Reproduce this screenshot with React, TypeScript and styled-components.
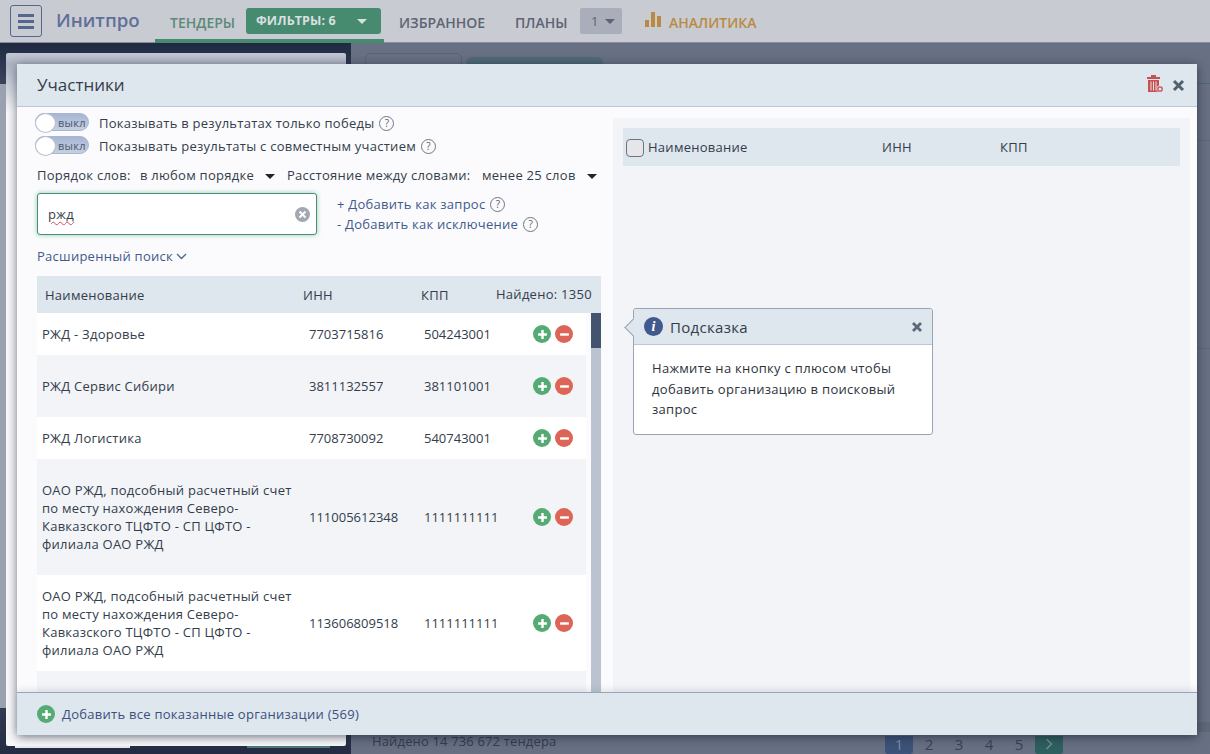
import React from "react";
import styled, { createGlobalStyle } from "styled-components";

const Global = createGlobalStyle`
  html, body { margin: 0; padding: 0; width: 1210px; height: 754px; overflow: hidden; background: #687083; }
  * { box-sizing: border-box; }
  body { font-family: "Open Sans", "Noto Sans", sans-serif; font-size: 13px; color: #333d4b; }
`;

const Page = styled.div`
  position: relative;
  width: 1210px;
  height: 754px;
  overflow: hidden;
  background: #687083;
`;

const TopBar = styled.header`
  position: absolute;
  inset: 0 0 auto 0;
  height: 43px;
  background: #c9cbd2;
  border-bottom: 1px solid #868c9c;
`;
const MenuButton = styled.div`
  position: absolute;
  left: 10px;
  top: 5px;
  width: 32px;
  height: 32px;
  border: 1px solid #54678f;
  border-radius: 3px;
  display: flex;
  flex-direction: column;
  justify-content: center;
  gap: 3px;
  padding: 0 7px;
  span { display: block; height: 3px; background: #54678f; }
`;
const Logo = styled.div`
  position: absolute;
  left: 56px;
  top: 5px;
  font-size: 18.6px;
  line-height: 30px;
  font-weight: 600;
  color: #5f7098;
`;
const NavItem = styled.div<{ $x: number; $color?: string }>`
  position: absolute;
  left: ${(p) => p.$x}px;
  top: 13px;
  font-size: 14px;
  line-height: 19px;
  font-weight: 600;
  color: ${(p) => p.$color || "#5d6473"};
  white-space: nowrap;
`;
const ActiveLine = styled.div`
  position: absolute;
  left: 155px;
  top: 39px;
  width: 229px;
  height: 4px;
  background: #468a70;
`;
const FilterButton = styled.div`
  position: absolute;
  left: 246px;
  top: 8px;
  width: 135px;
  height: 26px;
  border-radius: 3px;
  background: #468a70;
  color: #d9e0e0;
  font-size: 12.5px;
  font-weight: 700;
  letter-spacing: 0.1px;
  line-height: 26px;
  padding-left: 10px;
`;
const Caret = styled.i<{ $x?: number; $y?: number; $color?: string; $size?: number }>`
  position: absolute;
  left: ${(p) => p.$x ?? 0}px;
  top: ${(p) => p.$y ?? 0}px;
  width: 0;
  height: 0;
  border-left: ${(p) => p.$size ?? 5}px solid transparent;
  border-right: ${(p) => p.$size ?? 5}px solid transparent;
  border-top: ${(p) => p.$size ?? 5}px solid ${(p) => p.$color || "#1f2530"};
`;
const PlanBadge = styled.div`
  position: absolute;
  left: 580px;
  top: 8px;
  width: 42px;
  height: 26px;
  background: #a9aeba;
  border-radius: 2px;
  color: #5d6473;
  font-size: 13px;
  line-height: 26px;
  padding-left: 11px;
`;
const Bars = styled.svg`
  position: absolute;
  left: 644px;
  top: 11px;
`;

const DarkPane = styled.div`
  position: absolute;
  left: 0;
  top: 43px;
  width: 351px;
  height: 711px;
  background: linear-gradient(#1f2a42 0, #3a445a 40px, #3a445a 640px, #232c42 100%);
`;
const LeftStrip = styled.div`
  position: absolute;
  left: 0;
  top: 84px;
  width: 6px;
  height: 624px;
  background: #9aa1af;
`;
const BackModal = styled.div`
  position: absolute;
  left: 6px;
  top: 53px;
  width: 340px;
  height: 693px;
  background: #fafafc;
  background-image: linear-gradient(#c4c8d4 0, #aeb4c3 11px, #d8dbe3 40px, #fafafc 60px);
  border-radius: 2px;
`;
const BackEdge = styled.div<{ $x: number; $w: number; $c: string }>`
  position: absolute;
  left: ${(p) => p.$x}px;
  top: 746px;
  width: ${(p) => p.$w}px;
  height: 2px;
  background: ${(p) => p.$c};
`;
const BackTab = styled.div<{ $x: number; $w: number; $y: number; $bg: string; $border?: string }>`
  position: absolute;
  left: ${(p) => p.$x}px;
  top: ${(p) => p.$y}px;
  width: ${(p) => p.$w}px;
  height: 20px;
  border-radius: 6px 6px 0 0;
  background: ${(p) => p.$bg};
  border: ${(p) => (p.$border ? `1px solid ${p.$border}` : "none")};
`;
const BackFound = styled.div`
  position: absolute;
  left: 372px;
  top: 732px;
  font-size: 13px;
  line-height: 18px;
  letter-spacing: 0.15px;
  color: #363c4c;
`;
const PageBtn = styled.div<{ $x: number; $w?: number; $bg?: string }>`
  position: absolute;
  left: ${(p) => p.$x}px;
  top: 736px;
  width: ${(p) => p.$w ?? 28}px;
  height: 18px;
  background: ${(p) => p.$bg || "transparent"};
  border-radius: 0 0 3px 3px;
  text-align: center;
  font-size: 15px;
  line-height: 16px;
  color: ${(p) => (p.$bg ? "#7e8ea8" : "#39405a")};
`;
const NextGlyph = styled.svg`
  display: block;
  margin: 2px auto 0;
`;
const SideLine = styled.div<{ $y: number; $h?: number; $c?: string }>`
  position: absolute;
  left: 1197px;
  right: 0;
  top: ${(p) => p.$y}px;
  height: ${(p) => p.$h ?? 1}px;
  background: ${(p) => p.$c || "#5f6879"};
`;

const Modal = styled.section`
  position: absolute;
  left: 17px;
  top: 64px;
  width: 1180px;
  height: 671px;
  background: #fbfbfd;
  box-shadow: 0 2px 10px rgba(20, 28, 48, 0.6);
`;
const ModalHead = styled.div`
  position: absolute;
  inset: 0 0 auto 0;
  height: 43px;
  background: #dee6ee;
  border-bottom: 1px solid #bcc6d6;
  font-size: 17px;
  line-height: 42px;
  padding-left: 20px;
  color: #333d4b;
`;
const HeadIcon = styled.svg<{ $x: number; $y: number }>`
  position: absolute;
  left: ${(p) => p.$x}px;
  top: ${(p) => p.$y}px;
`;
const RightPanel = styled.div`
  position: absolute;
  left: 596px;
  top: 54px;
  width: 577px;
  height: 574px;
  background: #f2f4f8;
`;
const RightHead = styled.div`
  position: absolute;
  left: 10px;
  top: 10px;
  width: 557px;
  height: 38px;
  background: #dee6ee;
`;
const Check = styled.div`
  position: absolute;
  left: 3px;
  top: 11px;
  width: 18px;
  height: 18px;
  border: 1px solid #6d7480;
  border-radius: 4px;
  background: #e4e6ea;
`;
const HeadCell = styled.div<{ $x: number; $y?: number }>`
  position: absolute;
  left: ${(p) => p.$x}px;
  top: ${(p) => p.$y ?? 10}px;
  font-size: 13px;
  line-height: 18px;
  letter-spacing: 0.27px;
  font-weight: 400;
  color: #333d4b;
  white-space: nowrap;
`;

const Toggle = styled.div<{ $y: number }>`
  position: absolute;
  left: 18px;
  top: ${(p) => p.$y}px;
  width: 54px;
  height: 18px;
  border-radius: 9px;
  border: 1px solid #a9b6cf;
  background: linear-gradient(#a6b6d4, #c6d0e2);
  font-size: 11px;
  line-height: 17px;
  letter-spacing: 0.3px;
  color: #4c586c;
  padding-left: 22px;
  &::before {
    content: "";
    position: absolute;
    left: -1px;
    top: -1px;
    width: 19px;
    height: 18px;
    border-radius: 50%;
    background: #fff;
    border: 1px solid #b4bdcd;
  }
`;
const Line = styled.div<{ $x: number; $y: number; $color?: string; $weight?: number }>`
  position: absolute;
  left: ${(p) => p.$x}px;
  top: ${(p) => p.$y}px;
  font-size: 13px;
  line-height: 18px;
  letter-spacing: 0.26px;
  font-weight: ${(p) => p.$weight ?? 400};
  color: ${(p) => p.$color || "#333d4b"};
  white-space: nowrap;
  display: flex;
  align-items: center;
`;
const Help = styled.span`
  display: inline-block;
  width: 15px;
  height: 15px;
  margin-left: 5px;
  border: 1px solid #6f7682;
  border-radius: 50%;
  font-size: 10px;
  line-height: 13px;
  letter-spacing: 0;
  text-align: center;
  color: #555c68;
`;
const SearchBox = styled.div`
  position: absolute;
  left: 20px;
  top: 129px;
  width: 280px;
  height: 42px;
  background: #fff;
  border: 1px solid #479073;
  border-radius: 3px;
  box-shadow: 0 0 5px rgba(71, 160, 115, 0.55);
  padding-left: 10px;
  line-height: 40px;
  font-size: 13px;
  letter-spacing: 0.4px;
  color: #333d4b;
  span { text-decoration: underline wavy #d85050 1px; text-underline-offset: 2px; }
`;
const ClearBtn = styled.div`
  position: absolute;
  right: 6px;
  top: 13px;
  width: 15px;
  height: 15px;
  border-radius: 50%;
  background: #a2a8b3;
  display: flex;
  align-items: center;
  justify-content: center;
`;
const Chevron = styled.svg`
  margin-left: 3px;
`;

const TableHead = styled.div`
  position: absolute;
  left: 20px;
  top: 212px;
  width: 564px;
  height: 37px;
  background: #dee6ee;
`;
const Rows = styled.div`
  position: absolute;
  left: 20px;
  top: 249px;
  width: 549px;
  height: 379px;
  overflow: hidden;
`;
const Row = styled.div<{ $h: number; $alt?: boolean }>`
  height: ${(p) => p.$h}px;
  background: ${(p) => (p.$alt ? "#f2f4f8" : "#fff")};
  display: grid;
  grid-template-columns: 267px 115px 109px 58px;
  align-items: center;
  font-size: 13px;
  line-height: 18px;
  color: #333d4b;
`;
const NameCell = styled.div`
  padding-left: 5px;
  width: 262px;
  letter-spacing: 0.25px;
`;
const NumCell = styled.div`
  padding-left: 5px;
`;
const Actions = styled.div`
  display: flex;
  gap: 4px;
  margin-left: 5px;
`;
const RoundBtn = styled.div<{ $c: string; $s?: number }>`
  width: ${(p) => p.$s ?? 18}px;
  height: ${(p) => p.$s ?? 18}px;
  border-radius: 50%;
  background: ${(p) => p.$c};
  display: flex;
  align-items: center;
  justify-content: center;
`;
const ScrollTrack = styled.div`
  position: absolute;
  left: 574px;
  top: 249px;
  width: 10px;
  height: 379px;
  background: #bcc3d0;
`;
const ScrollThumb = styled.div`
  height: 35px;
  background: #44546f;
`;
const ModalFoot = styled.div`
  position: absolute;
  inset: auto 0 0 0;
  height: 43px;
  background: #dee6ee;
  border-top: 1px solid #9aa5b8;
  box-shadow: 0 -3px 6px rgba(60, 70, 90, 0.12);
  display: flex;
  align-items: center;
  padding-left: 20px;
  gap: 7px;
  color: #3c4f7c;
  font-size: 13px;
  letter-spacing: 0.27px;
`;

const Hint = styled.div`
  position: absolute;
  left: 20px;
  top: 190px;
  width: 300px;
  height: 127px;
  background: #fff;
  border: 1px solid #9aa3b3;
  border-radius: 3px;
`;
const HintArrow = styled.div`
  position: absolute;
  left: -7px;
  top: 12px;
  width: 13px;
  height: 13px;
  background: #dee6ee;
  border-left: 1px solid #9aa3b3;
  border-bottom: 1px solid #9aa3b3;
  transform: rotate(45deg);
`;
const HintHead = styled.div`
  position: relative;
  height: 36px;
  background: #dee6ee;
  border-bottom: 1px solid #bcc6d6;
  border-radius: 3px 3px 0 0;
  display: flex;
  align-items: center;
  padding-left: 10px;
  gap: 7px;
  font-size: 15px;
  letter-spacing: 0.3px;
  color: #333d4b;
`;
const InfoDot = styled.div`
  width: 19px;
  height: 19px;
  border-radius: 50%;
  background: #41598c;
  color: #fff;
  font-family: "Liberation Serif", serif;
  font-style: italic;
  font-weight: 700;
  font-size: 14px;
  line-height: 19px;
  text-align: center;
`;
const HintClose = styled.svg`
  position: absolute;
  right: 9px;
  top: 12px;
`;
const HintBody = styled.div`
  padding: 13px 18px 0;
  font-size: 13px;
  line-height: 20.5px;
  letter-spacing: 0.3px;
  color: #2d333d;
`;

const Plus = ({ s = 11 }: { s?: number }) => (
  <svg width={s} height={s} viewBox="0 0 10 10">
    <path d="M5 1v8M1 5h8" stroke="#fff" strokeWidth="2.2" />
  </svg>
);
const Minus = () => (
  <svg width="11" height="11" viewBox="0 0 10 10">
    <path d="M1 5h8" stroke="#fff" strokeWidth="2.2" />
  </svg>
);

const GREEN = "#56ab74";
const RED = "#dd6558";
const LONG = "ОАО РЖД, подсобный расчетный счет по месту нахождения Северо-Кавказского ТЦФТО - СП ЦФТО - филиала ОАО РЖД";
const rows = [
  { h: 42, name: "РЖД - Здоровье", inn: "7703715816", kpp: "504243001" },
  { h: 62, name: "РЖД Сервис Сибири", inn: "3811132557", kpp: "381101001", alt: true },
  { h: 42, name: "РЖД Логистика", inn: "7708730092", kpp: "540743001" },
  { h: 116, name: LONG, inn: "111005612348", kpp: "1111111111", alt: true },
  { h: 96, name: LONG, inn: "113606809518", kpp: "1111111111" },
  { h: 40, alt: true },
];

export default function App() {
  return (
    <Page>
      <Global />
      <TopBar>
        <MenuButton><span /><span /><span /></MenuButton>
        <Logo>Инитпро</Logo>
        <ActiveLine />
        <NavItem $x={170} $color="#5b8a78">ТЕНДЕРЫ</NavItem>
        <FilterButton>
          ФИЛЬТРЫ: 6
          <Caret $x={111} $y={11} $color="#d9e0e0" />
        </FilterButton>
        <NavItem $x={399}>ИЗБРАННОЕ</NavItem>
        <NavItem $x={515}>ПЛАНЫ</NavItem>
        <PlanBadge>
          1
          <Caret $x={25} $y={11} $color="#5d6473" />
        </PlanBadge>
        <Bars width="18" height="16" viewBox="0 0 18 16">
          <path d="M1 9h4v7H1zM7 1h4v15H7zM13 5h4v11h-4z" fill="#b98a42" />
        </Bars>
        <NavItem $x={669} $color="#b98a42">АНАЛИТИКА</NavItem>
      </TopBar>

      <DarkPane />
      <LeftStrip />
      <BackModal />
      <BackEdge $x={15} $w={115} $c="#e8eaf0" />
      <BackEdge $x={247} $w={83} $c="#4f7a78" />
      <BackTab $x={365} $y={53} $w={97} $bg="#687083" $border="#4f6a74" />
      <BackTab $x={466} $y={57} $w={137} $bg="#4f6a74" />
      <SideLine $y={83} $c="#4f6a74" />
      <SideLine $y={140} />
      <SideLine $y={348} />
      <SideLine $y={722} $h={10} $c="#5f6879" />
      <BackFound>Найдено 14 736 672 тендера</BackFound>
      <PageBtn $x={885} $bg="#3d5379">1</PageBtn>
      <PageBtn $x={915}>2</PageBtn>
      <PageBtn $x={945}>3</PageBtn>
      <PageBtn $x={975}>4</PageBtn>
      <PageBtn $x={1005}>5</PageBtn>
      <PageBtn $x={1035} $bg="#2f5f5e">
        <NextGlyph width="8" height="12" viewBox="0 0 8 12">
          <path d="M1.5 1l5 5-5 5" fill="none" stroke="#6f8f8e" strokeWidth="1.5" />
        </NextGlyph>
      </PageBtn>

      <Modal>
        <ModalHead>Участники</ModalHead>
        <HeadIcon $x={1129} $y={10} width="18" height="19" viewBox="0 0 18 19">
          <path d="M1 3h13v2H1zM5 1h5v2H5z" fill="#c9504f" />
          <path d="M2 6h11v12H2z" fill="#c9504f" />
          <path d="M5 7.5v9M7.5 7.5v9M10 7.5v9" stroke="#dee6ee" strokeWidth="1" />
          <circle cx="14" cy="15" r="3.4" fill="#dee6ee" />
          <circle cx="14" cy="15" r="2.2" fill="none" stroke="#c9504f" strokeWidth="1.3" />
        </HeadIcon>
        <HeadIcon $x={1155} $y={15} width="13" height="13" viewBox="0 0 13 13">
          <path d="M2 2l9 9M11 2l-9 9" stroke="#50606f" strokeWidth="3" />
        </HeadIcon>

        <Toggle $y={49}>выкл</Toggle>
        <Line $x={82} $y={50}>Показывать в результатах только победы<Help>?</Help></Line>
        <Toggle $y={72}>выкл</Toggle>
        <Line $x={82} $y={73}>Показывать результаты с совместным участием<Help>?</Help></Line>

        <Line $x={20} $y={102}>Порядок слов:</Line>
        <Line $x={123} $y={102}>в любом порядке</Line>
        <Caret $x={248} $y={110} />
        <Line $x={270} $y={102}>Расстояние между словами:</Line>
        <Line $x={465} $y={102}>менее 25 слов</Line>
        <Caret $x={570} $y={110} />

        <SearchBox>
          <span>ржд</span>
          <ClearBtn>
            <svg width="9" height="9" viewBox="0 0 9 9">
              <path d="M1.5 1.5l6 6M7.5 1.5l-6 6" stroke="#fff" strokeWidth="2" />
            </svg>
          </ClearBtn>
        </SearchBox>
        <Line $x={320} $y={131} $color="#3f5a8c">+ Добавить как запрос<Help>?</Help></Line>
        <Line $x={320} $y={151} $color="#3f5a8c">- Добавить как исключение<Help>?</Help></Line>
        <Line $x={20} $y={183} $color="#3f5a8c">
          Расширенный поиск
          <Chevron width="11" height="7" viewBox="0 0 11 7">
            <path d="M1 1l4.5 4.5L10 1" fill="none" stroke="#4f6a90" strokeWidth="1.4" />
          </Chevron>
        </Line>

        <TableHead>
          <HeadCell $x={8} $y={10}>Наименование</HeadCell>
          <HeadCell $x={266} $y={10}>ИНН</HeadCell>
          <HeadCell $x={384} $y={10}>КПП</HeadCell>
          <HeadCell $x={459} $y={9}>Найдено: 1350</HeadCell>
        </TableHead>
        <Rows>
          {rows.map((r, i) => (
            <Row key={i} $h={r.h} $alt={r.alt}>
              {r.name && (
                <>
                  <NameCell>{r.name}</NameCell>
                  <NumCell>{r.inn}</NumCell>
                  <NumCell>{r.kpp}</NumCell>
                  <Actions>
                    <RoundBtn $c={GREEN}><Plus /></RoundBtn>
                    <RoundBtn $c={RED}><Minus /></RoundBtn>
                  </Actions>
                </>
              )}
            </Row>
          ))}
        </Rows>
        <ScrollTrack><ScrollThumb /></ScrollTrack>

        <RightPanel>
          <RightHead>
            <Check />
            <HeadCell $x={25}>Наименование</HeadCell>
            <HeadCell $x={259}>ИНН</HeadCell>
            <HeadCell $x={377}>КПП</HeadCell>
          </RightHead>
          <Hint>
            <HintArrow />
            <HintHead>
              <InfoDot>i</InfoDot>
              Подсказка
              <HintClose width="12" height="12" viewBox="0 0 12 12">
                <path d="M2 2l8 8M10 2l-8 8" stroke="#5a6878" strokeWidth="2.8" />
              </HintClose>
            </HintHead>
            <HintBody>
              Нажмите на кнопку с плюсом чтобы добавить организацию в поисковый запрос
            </HintBody>
          </Hint>
        </RightPanel>

        <ModalFoot>
          <RoundBtn $c={GREEN}><Plus /></RoundBtn>
          Добавить все показанные организации (569)
        </ModalFoot>
      </Modal>
    </Page>
  );
}
